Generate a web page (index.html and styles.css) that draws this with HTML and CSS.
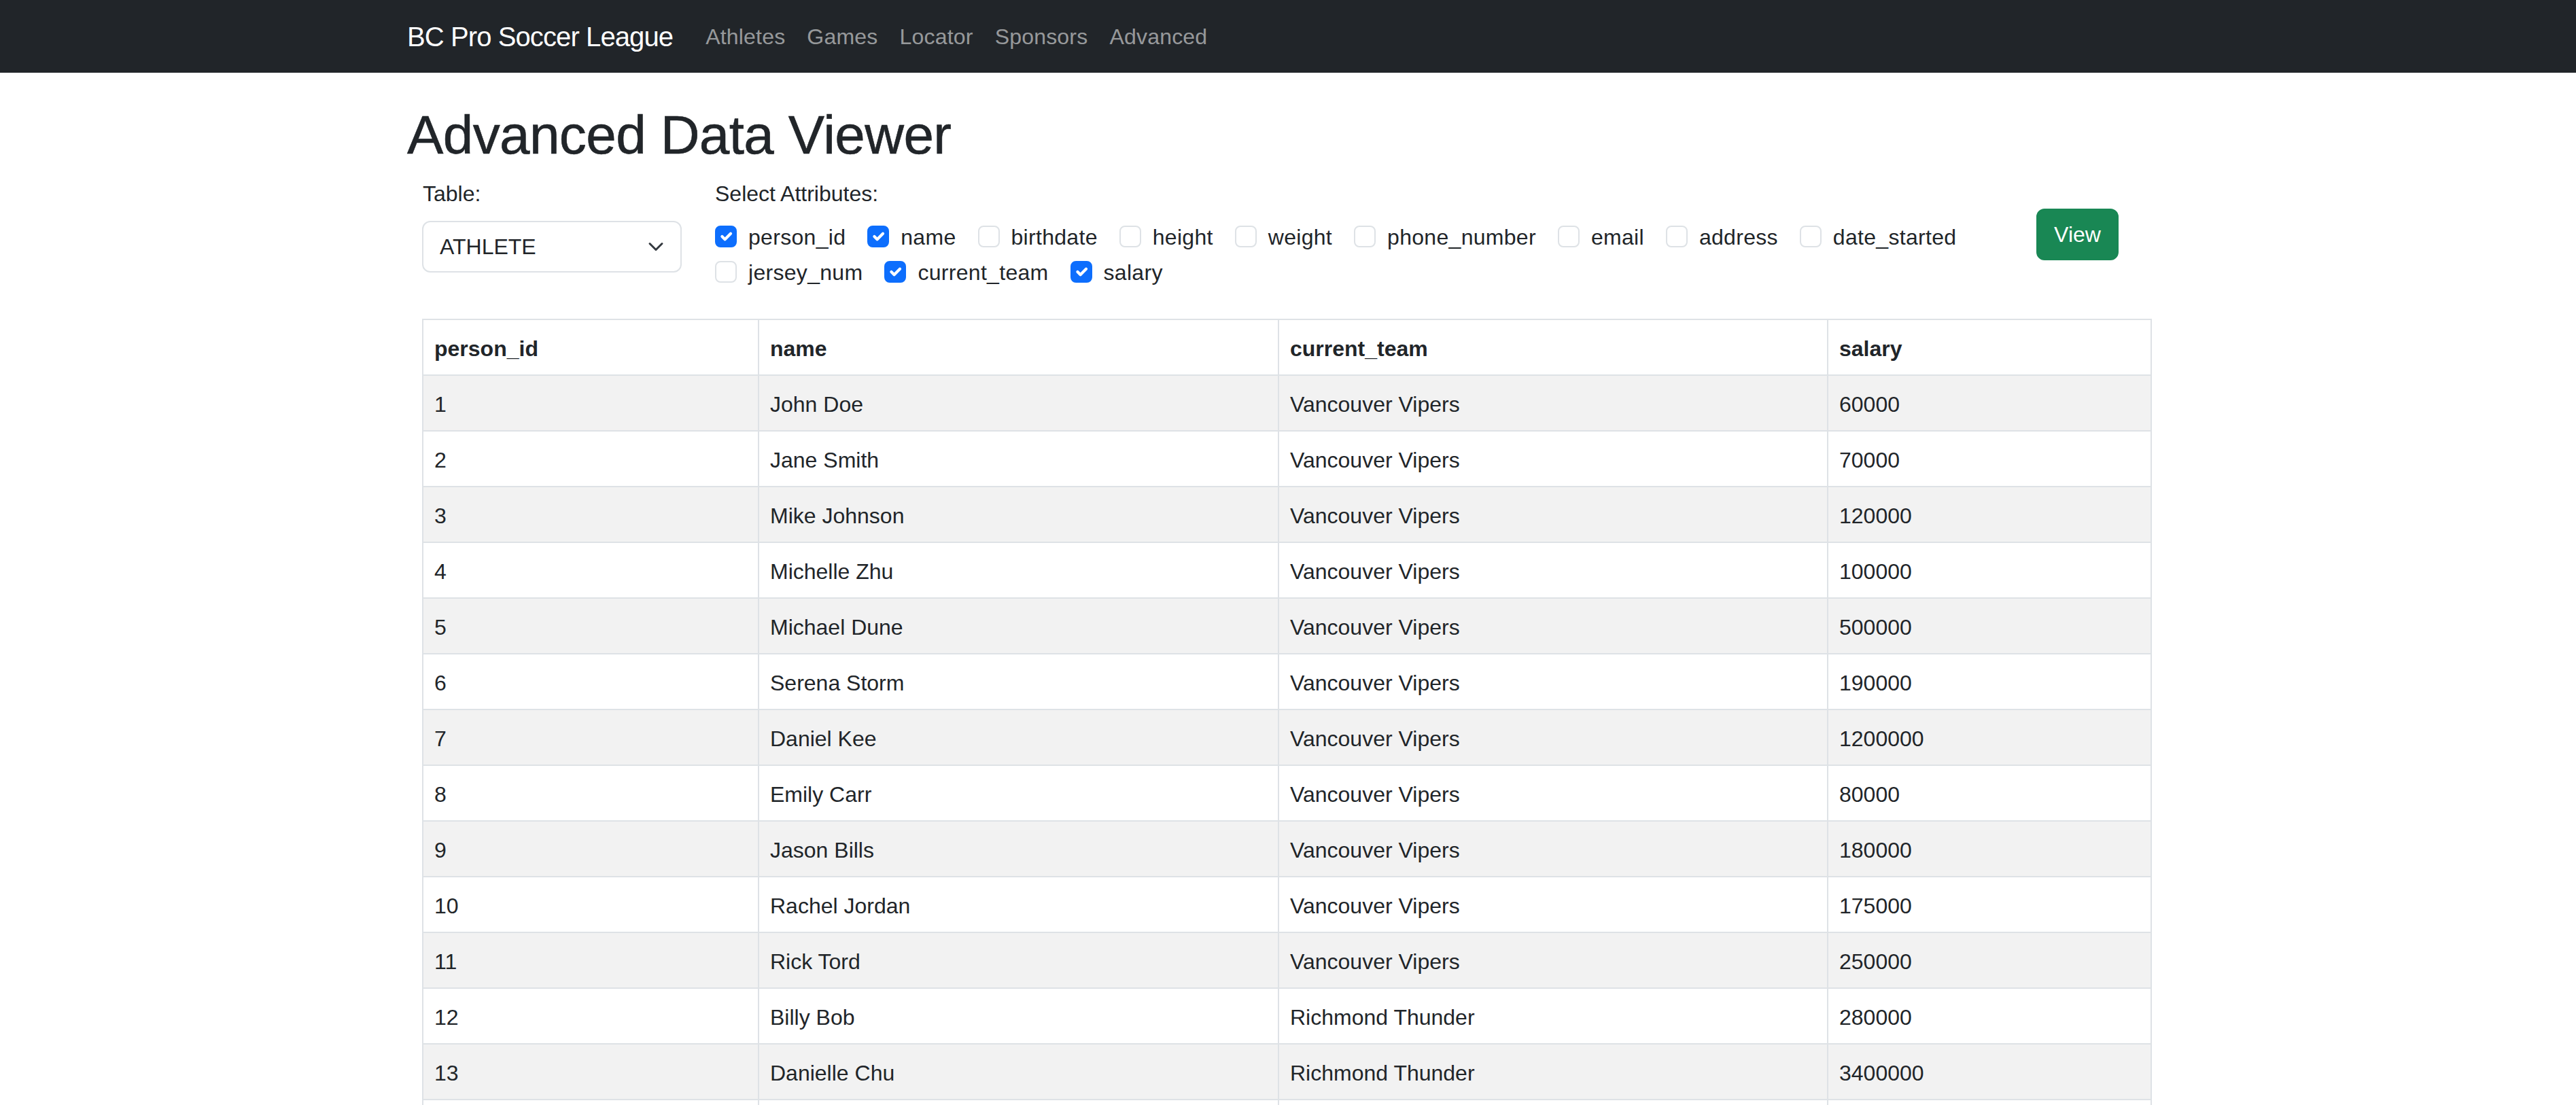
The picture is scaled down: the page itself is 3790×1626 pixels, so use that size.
FILE: index.html
```html
<!DOCTYPE html>
<html lang="en">
<head>
<meta charset="utf-8">
<title>Advanced Data Viewer</title>
<link rel="stylesheet" href="styles.css">
</head>
<body>
<nav class="navbar">
  <div class="container nav-inner">
    <a class="brand" href="#">BC Pro Soccer League</a>
    <ul class="nav-links">
      <li><a href="#">Athletes</a></li>
      <li><a href="#">Games</a></li>
      <li><a href="#">Locator</a></li>
      <li><a href="#">Sponsors</a></li>
      <li><a href="#">Advanced</a></li>
    </ul>
  </div>
</nav>
<main class="container">
  <h1 class="title">Advanced Data Viewer</h1>
  <div class="panel">
    <form class="query-form">
      <div class="field">
        <div class="label">Table:</div>
        <div class="select">
          <span>ATHLETE</span>
          <svg class="chevron" viewBox="0 0 16 16" width="24" height="24"><path d="m2 5 6 6 6-6" fill="none" stroke="#343a40" stroke-width="2" stroke-linecap="round" stroke-linejoin="round"/></svg>
        </div>
      </div>
      <div class="field">
        <div class="label">Select Attributes:</div>
        <div class="checks">
          <label class="check"><span class="cb on"><svg viewBox="0 0 20 20"><path d="m6 10 3 3 6-6" fill="none" stroke="#fff" stroke-width="3" stroke-linecap="round" stroke-linejoin="round"/></svg></span>person_id</label>
          <label class="check"><span class="cb on"><svg viewBox="0 0 20 20"><path d="m6 10 3 3 6-6" fill="none" stroke="#fff" stroke-width="3" stroke-linecap="round" stroke-linejoin="round"/></svg></span>name</label>
          <label class="check"><span class="cb"></span>birthdate</label>
          <label class="check"><span class="cb"></span>height</label>
          <label class="check"><span class="cb"></span>weight</label>
          <label class="check"><span class="cb"></span>phone_number</label>
          <label class="check"><span class="cb"></span>email</label>
          <label class="check"><span class="cb"></span>address</label>
          <label class="check"><span class="cb"></span>date_started</label>
          <label class="check"><span class="cb"></span>jersey_num</label>
          <label class="check"><span class="cb on"><svg viewBox="0 0 20 20"><path d="m6 10 3 3 6-6" fill="none" stroke="#fff" stroke-width="3" stroke-linecap="round" stroke-linejoin="round"/></svg></span>current_team</label>
          <label class="check"><span class="cb on"><svg viewBox="0 0 20 20"><path d="m6 10 3 3 6-6" fill="none" stroke="#fff" stroke-width="3" stroke-linecap="round" stroke-linejoin="round"/></svg></span>salary</label>
        </div>
      </div>
      <button class="btn-view" type="button">View</button>
    </form>
    <table class="data-table">
      <colgroup>
        <col class="c1"><col class="c2"><col class="c3"><col class="c4">
      </colgroup>
      <thead>
        <tr><th>person_id</th><th>name</th><th>current_team</th><th>salary</th></tr>
      </thead>
      <tbody>
        <tr><td>1</td><td>John Doe</td><td>Vancouver Vipers</td><td>60000</td></tr>
        <tr><td>2</td><td>Jane Smith</td><td>Vancouver Vipers</td><td>70000</td></tr>
        <tr><td>3</td><td>Mike Johnson</td><td>Vancouver Vipers</td><td>120000</td></tr>
        <tr><td>4</td><td>Michelle Zhu</td><td>Vancouver Vipers</td><td>100000</td></tr>
        <tr><td>5</td><td>Michael Dune</td><td>Vancouver Vipers</td><td>500000</td></tr>
        <tr><td>6</td><td>Serena Storm</td><td>Vancouver Vipers</td><td>190000</td></tr>
        <tr><td>7</td><td>Daniel Kee</td><td>Vancouver Vipers</td><td>1200000</td></tr>
        <tr><td>8</td><td>Emily Carr</td><td>Vancouver Vipers</td><td>80000</td></tr>
        <tr><td>9</td><td>Jason Bills</td><td>Vancouver Vipers</td><td>180000</td></tr>
        <tr><td>10</td><td>Rachel Jordan</td><td>Vancouver Vipers</td><td>175000</td></tr>
        <tr><td>11</td><td>Rick Tord</td><td>Vancouver Vipers</td><td>250000</td></tr>
        <tr><td>12</td><td>Billy Bob</td><td>Richmond Thunder</td><td>280000</td></tr>
        <tr><td>13</td><td>Danielle Chu</td><td>Richmond Thunder</td><td>3400000</td></tr>
        <tr class="more-row"><td></td><td></td><td></td><td></td></tr>
      </tbody>
    </table>
  </div>
</main>
</body>
</html>
```
FILE: styles.css
```css
* { box-sizing: border-box; }
html, body { margin: 0; padding: 0; }
body {
  font-family: "Liberation Sans", Arial, sans-serif;
  font-size: 32px;
  line-height: 48px;
  color: #212529;
  background: #fff;
}
.container {
  width: 2592px;
  margin: 0 auto;
}
.navbar {
  background: #212529;
  height: 107px;
}
.nav-inner {
  height: 107px;
  display: flex;
  align-items: center;
}
.brand {
  font-size: 40px;
  line-height: 60px;
  color: #fff;
  text-decoration: none;
  letter-spacing: -0.9px;
  margin-right: 32px;
}
.nav-links {
  list-style: none;
  margin: 0;
  padding: 0;
  display: flex;
}
.nav-links a {
  display: block;
  padding: 8px 16px;
  color: rgba(255, 255, 255, 0.55);
  text-decoration: none;
  letter-spacing: 0.2px;
}
.title {
  font-size: 80px;
  line-height: 96px;
  font-weight: 500;
  margin: 44px 0 14px;
  letter-spacing: -0.6px;
  -webkit-text-stroke: 0.6px #212529;
}
.panel {
  padding: 0 27px 0 22px;
}
.query-form {
  display: grid;
  grid-template-columns: 382px 1895px 121px;
  column-gap: 49px;
  align-items: start;
}
.label {
  line-height: 48px;
  margin-bottom: 16px;
}
.field:first-child .label { padding-left: 1px; }
.select {
  height: 76px;
  border: 2px solid #dee2e6;
  border-radius: 12px;
  display: flex;
  align-items: center;
  justify-content: space-between;
  padding: 0 24px;
}
.chevron { display: block; }
.checks {
  display: flex;
  flex-wrap: wrap;
}
.check {
  display: inline-flex;
  align-items: flex-start;
  height: 48px;
  margin: 0 32px 4px 0;
  letter-spacing: 0.3px;
}
.cb {
  width: 32px;
  height: 32px;
  margin: 7px 17px 0 0;
  border: 2px solid #dee2e6;
  border-radius: 8px;
  background: #fff;
  display: block;
}
.cb.on {
  background: #0d6efd;
  border-color: #0d6efd;
}
.cb svg {
  display: block;
  width: 28px;
  height: 28px;
}
.btn-view {
  align-self: center;
  width: 121px;
  height: 76px;
  border: 2px solid #198754;
  background: #198754;
  color: #fff;
  border-radius: 12px;
  font-family: inherit;
  font-size: 32px;
  line-height: 48px;
  padding: 0;
}
.data-table {
  margin-top: 40px;
  width: 2543px;
  border-collapse: collapse;
  table-layout: fixed;
}
.c1 { width: 494px; }
.c2 { width: 765px; }
.c3 { width: 808px; }
.c4 { width: 476px; }
.data-table th,
.data-table td {
  border: 2px solid #dee2e6;
  padding: 18px 16px 14px;
  text-align: left;
  line-height: 48px;
  height: 82px;
}
.data-table th { font-weight: 700; }
.data-table tbody tr:nth-child(odd) td { background: #f2f2f2; }
```
